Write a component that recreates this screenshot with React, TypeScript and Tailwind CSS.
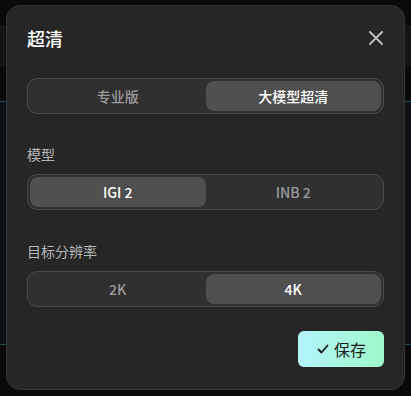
import { useState } from 'react';

function Segmented({
  options,
  value,
  onChange,
}: {
  options: string[];
  value: number;
  onChange: (i: number) => void;
}) {
  return (
    <div className="flex h-9 rounded-[10px] border border-[#4a4a4a] bg-[#303030] p-[2px]">
      {options.map((opt, i) => (
        <button
          key={opt}
          onClick={() => onChange(i)}
          className={
            i === value
              ? 'flex-1 rounded-[8px] bg-[#4f4f4f] text-[14px] font-medium text-white'
              : 'flex-1 rounded-[8px] text-[14px] font-medium text-[#9a9a9a]'
          }
        >
          {opt}
        </button>
      ))}
    </div>
  );
}

export default function App() {
  const [mode, setMode] = useState(1);
  const [model, setModel] = useState(0);
  const [res, setRes] = useState(1);

  return (
    <div
      className="relative h-[396px] w-[411px] overflow-hidden bg-[#0a0a0a] pt-[5px] pl-[6px]"
      style={{ fontFamily: '"Noto Sans CJK SC", "Noto Sans", sans-serif' }}
    >
      {/* backdrop */}
      <div className="absolute left-0 right-0 top-[25px] h-[42px] bg-[#141414]" />
      <div className="absolute left-0 right-0 top-[100px] h-[245px] bg-[#0b1114]" />
      <div className="absolute left-0 right-0 top-[101px] h-px bg-[#1d4b50]" />
      <div className="absolute left-0 right-0 top-[344px] h-px bg-[#1d4b50]" />

      <div className="relative flex h-[385px] w-[399px] flex-col rounded-[14px] border border-[#343434] bg-[#262626] px-5">
        <div className="flex items-center justify-between pt-[20px]">
          <h1 className="text-[18px] font-medium leading-6 text-white">超清</h1>
          <button className="mr-[-2px] text-[#bdbdbd]">
            <svg width="20" height="20" viewBox="0 0 20 20" fill="none" stroke="currentColor" strokeWidth="2" strokeLinecap="round">
              <path d="M4 4L16 16M16 4L4 16" />
            </svg>
          </button>
        </div>

        <div className="mt-[28px]">
          <Segmented options={['专业版', '大模型超清']} value={mode} onChange={setMode} />
        </div>

        <div className="mt-[30px] text-[14px] leading-5 text-[#b5b5b5]">模型</div>
        <div className="mt-[10px]">
          <Segmented options={['IGI 2', 'INB 2']} value={model} onChange={setModel} />
        </div>

        <div className="mt-[31px] text-[14px] leading-5 text-[#b5b5b5]">目标分辨率</div>
        <div className="mt-[10px]">
          <Segmented options={['2K', '4K']} value={res} onChange={setRes} />
        </div>

        <div className="mt-[24px] flex justify-end">
          <button className="flex h-9 w-[86px] items-center justify-center gap-1 rounded-[6px] bg-gradient-to-r from-[#b4f4fb] to-[#9ef8c9] text-[16px] text-[#1a1a1a]">
            <svg width="14" height="14" viewBox="0 0 14 14" fill="none" stroke="currentColor" strokeWidth="1.8" strokeLinecap="round" strokeLinejoin="round">
              <path d="M2.5 7.5L5.5 10.5L11.5 3.5" />
            </svg>
            保存
          </button>
        </div>
      </div>
    </div>
  );
}
